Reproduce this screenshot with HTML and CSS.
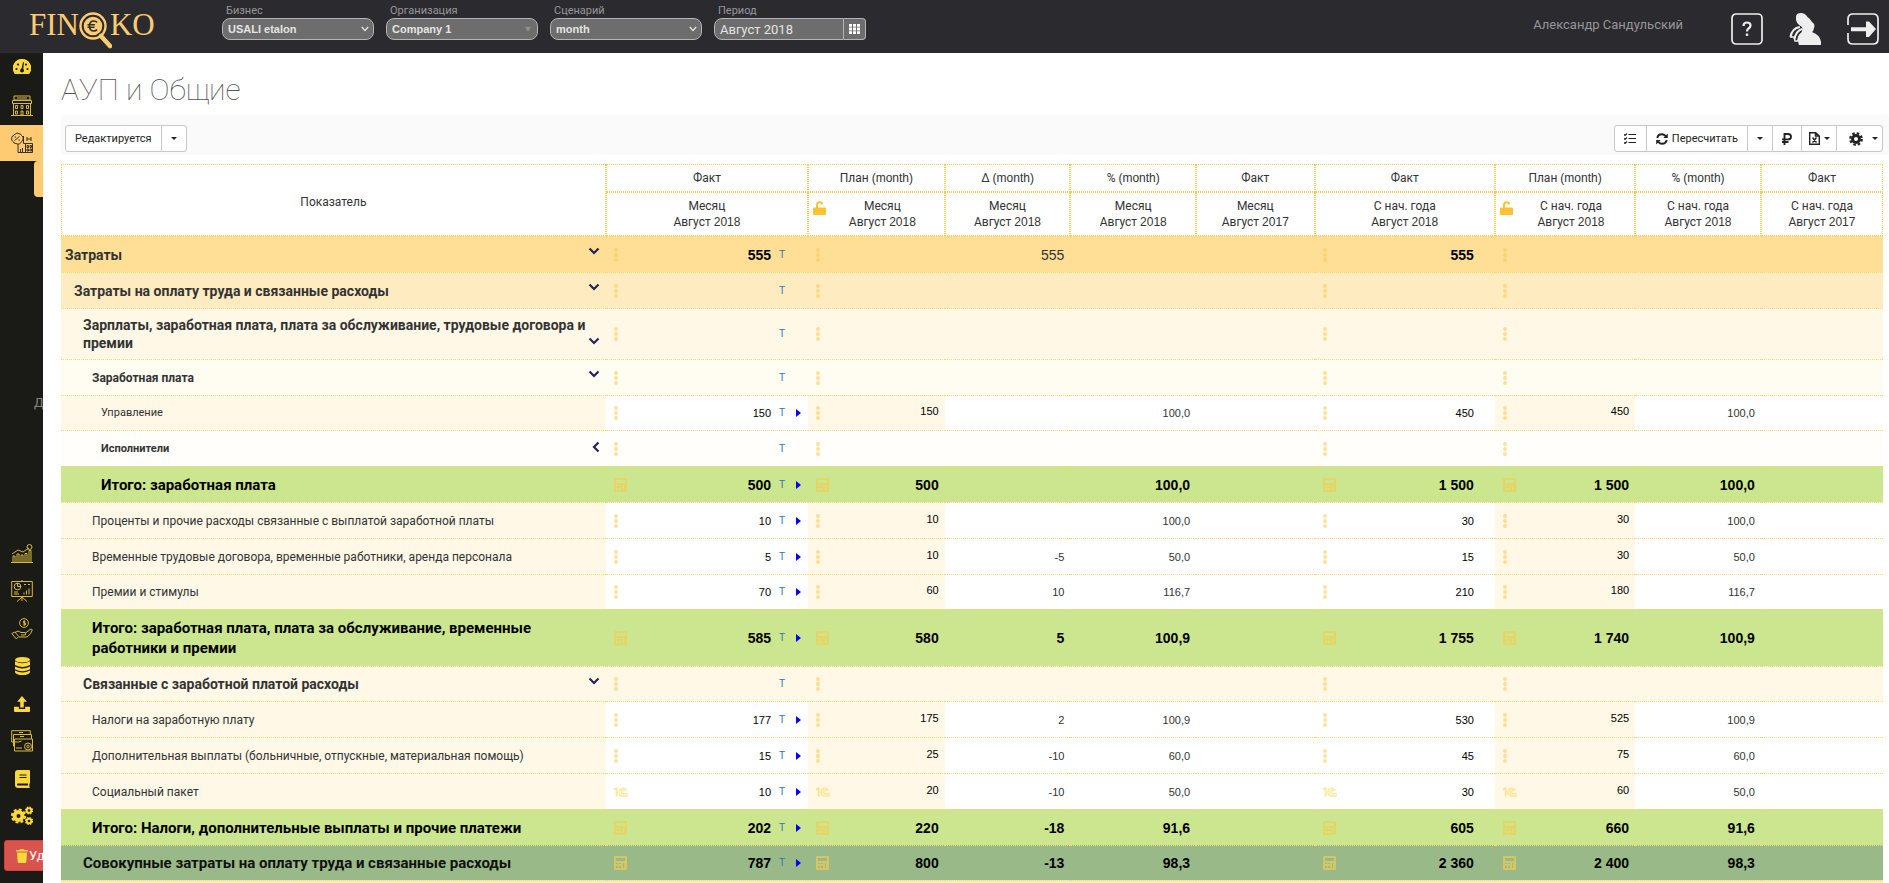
FILE: index.html
```html
<!DOCTYPE html>
<html lang="ru">
<head>
<meta charset="utf-8">
<title>АУП и Общие — Finoko</title>
<link rel="stylesheet" href="styles.css">
</head>
<body>
<svg class="sprite" aria-hidden="true">
  <symbol id="dots" viewBox="0 0 4 14"><path d="M2 2v10" stroke="currentColor" stroke-width="1" opacity=".5"/><circle cx="2" cy="2" r="2"/><circle cx="2" cy="7" r="2"/><circle cx="2" cy="12" r="2"/></symbol>
  <symbol id="calc" viewBox="0 0 13 14"><path fill-rule="evenodd" d="M1 0h11q1 0 1 1v12q0 1-1 1H1q-1 0-1-1V1q0-1 1-1zM2 2v3h9V2zM2 7v1h2V7zM5 7v1h2V7zM2 10v2h2v-2zM5 10v2h2v-2zM9 7v5h1V7z"/></symbol>
  <symbol id="onec" viewBox="0 0 14 10"><path d="M0 2.800L2.200 1M2.700.5V9.500" fill="none" stroke="currentColor" stroke-width="2"/><path d="M12.300 3.600A3.800 3.800 0 1 0 9 9H14M10.500 4A1.700 1.700 0 1 0 9 6.700H14" fill="none" stroke="currentColor" stroke-width="1.500"/></symbol>
  <symbol id="chev" viewBox="0 0 12 8"><path d="M1.500 1.500L6 6l4.500-4.500" fill="none" stroke="currentColor" stroke-width="2.200"/></symbol>
  <symbol id="chevl" viewBox="0 0 8 12"><path d="M6.500 1.500L2 6l4.500 4.500" fill="none" stroke="currentColor" stroke-width="2.200"/></symbol>
  <symbol id="play" viewBox="0 0 5 8"><path d="M0 0l5 4-5 4z"/></symbol>
  <symbol id="caret" viewBox="0 0 6 3"><path d="M0 0h6L3 3z"/></symbol>
  <symbol id="lock" viewBox="0 0 13 14"><path d="M4 7V4q0-2.800 2.600-2.800T9.200 3.600" fill="none" stroke="currentColor" stroke-width="2"/><rect y="6.500" width="13" height="7.500" rx="1"/></symbol>
</svg>

<header class="topbar">
  <a class="logo" href="#" aria-label="FINOKO"><span>FIN</span><svg class="logo-glass" viewBox="0 0 34 38"><circle cx="15" cy="15" r="12.500" fill="none" stroke="#fdcb70" stroke-width="2.400"/><circle cx="15" cy="15" r="9.300" fill="#fdcb70"/><path d="M23 25l9 10" stroke="#fdcb70" stroke-width="4.500" stroke-linecap="round"/><path d="M19 11.500q-1-1.500-3-1.500-4.500 0-4.500 5t4.500 5q2 0 3-1.500M9.500 13.800h7.500M9.500 16.300h7" fill="none" stroke="#2c2b30" stroke-width="1.600"/></svg><span>KO</span></a>
  <form class="filters">
    <div class="field"><label for="biz">Бизнес</label><div class="box"><select id="biz" class="lat"><option>USALI etalon</option></select><svg class="arrow" viewBox="0 0 8 6"><path d="M.8.8L4 4.600 7.200.8" fill="none" stroke="#eee" stroke-width="1.300"/></svg></div></div>
    <div class="field"><label for="org">Организация</label><div class="box"><select id="org" class="lat"><option>Company 1</option></select><svg class="arrow arrow-dim" viewBox="0 0 8 6"><path d="M1 1h6L4 5.500z"/></svg></div></div>
    <div class="field"><label for="scn">Сценарий</label><div class="box"><select id="scn" class="lat"><option>month</option></select><svg class="arrow" viewBox="0 0 8 6"><path d="M.8.8L4 4.600 7.200.8" fill="none" stroke="#eee" stroke-width="1.300"/></svg></div></div>
    <div class="field"><label for="per">Период</label><div class="box box-date"><input id="per" type="text" value="Август 2018"><button type="button" class="grid-btn" aria-label="Выбрать период"><svg viewBox="0 0 11 10"><path d="M0 0h3v2.800H0zM4 0h3v2.800H4zM8 0h3v2.800H8zM0 3.600h3v2.800H0zM4 3.600h3v2.800H4zM8 3.600h3v2.800H8zM0 7.200h3V10H0zM4 7.200h3V10H4zM8 7.200h3V10H8z"/></svg></button></div></div>
  </form>
  <div class="user">
    <span class="user-name">Александр Сандульский</span>
    <a href="#" class="top-ic" aria-label="Помощь"><svg viewBox="0 0 32 32"><rect x="1" y="1" width="30" height="30" rx="4" fill="none" stroke="#eee" stroke-width="1.700"/><path d="M12.500 13q0-3.500 3.500-3.500t3.500 3q0 1.700-2 3-1.500 1-1.500 3" fill="none" stroke="#eee" stroke-width="2.200"/><rect x="14.800" y="20.500" width="2.400" height="2.400"/></svg></a>
    <a href="#" class="top-ic" aria-label="Профиль"><svg viewBox="0 0 32 32"><path d="M7 4q0-4 5-4 4 0 6.500 4 2.500 1.500 4.500 5 3.500 2 2 6-.5 3-2 4 8 3 9 9.500V32H10q-2-5 1-10 3-4 2-8-7-4-6-10z"/><path d="M11 14Q3 15 1.500 24M13 16q-6 2-7.500 10M14 20q-4 1-5 8" fill="none" stroke="#eee" stroke-width="2"/><path d="M1 24h4l1 4h4" fill="none" stroke="#eee" stroke-width="1.500"/></svg></a>
    <a href="#" class="top-ic" aria-label="Выход"><svg viewBox="0 0 32 32"><path d="M1 12V6q0-5 5-5h20q5 0 5 5v20q0 5-5 5H6q-5 0-5-5v-6" fill="none" stroke="#eee" stroke-width="1.700"/><path d="M4 14.300h15V8.500h3L29 16l-7 8h-3v-5.700H4z"/></svg></a>
  </div>
</header>

<div class="layout">
  <nav class="side">
    <a href="#" class="side-it" aria-label="Панель"><svg width="18" height="16" viewBox="0 0 18 16"><path d="M9 0a9 9 0 0 1 8 13.500Q16.600 15 15.500 15h-13Q1.400 15 1 13.500A9 9 0 0 1 9 0z"/><g fill="#1a1a17"><circle cx="3.500" cy="10" r="1.100"/><circle cx="5" cy="5.500" r="1.100"/><circle cx="13" cy="5.500" r="1.100"/><circle cx="14.500" cy="10" r="1.100"/><circle cx="9" cy="11.500" r="2"/><path d="M8.300 11L10 3l1 .3-1 8z"/></g></svg></a>
    <a href="#" class="side-it side-mid" aria-label="Отель"><svg class="ln" width="22" height="22" viewBox="0 0 22 22"><path d="M3 1h16v4H3zM1.500 5.500h19v3h-19zM2.500 8.500V20M19.500 8.500V20M0 20.500h22M4.500 10.500h2v3h-2zM10 10.500h2v3h-2zM15.500 10.500h2v3h-2zM4.500 16h2v3h-2zM10 16h2v4h-2zM15.500 16h2v3h-2zM6 3h10"/></svg></a>
    <a href="#" class="side-it is-on" aria-label="Бюджеты"><svg class="ln" width="22" height="22" viewBox="0 0 22 22"><path d="M6 1l2 .8L9.500 2l1 1.500L12 5v2l-.5 2-1.500 1.200L8.500 12h-2L5 11.500 3 11l-1-1.500L.7 8V6L1.500 4 3 3zM3.500 8.500l5-4M3.500 5h1.500M7.500 8h1.500M7 12v8.500h14.500V11.500h-7v9M14.500 11.500h-2V4M16 5v4M20 5v4M16 7h4M9.500 20v-3M11.500 20v-4M16 13.500h1.500v2H16zM19 13.500h1.500v2H19zM16 17h1.500v2H16zM19 17h1.500v2H19z"/></svg></a>
    <span class="side-sub"></span>
    <span class="side-text">Доходы</span>
    <div class="side-low">
      <a href="#" class="side-it" aria-label="Графики"><svg class="ln" width="22" height="20" viewBox="0 0 22 20"><path d="M0 18.500h22M2 18v-6h2v6M6 18v-8h2v8M10 18v-7h2v7M14 18V9.500h2V18M18 18V6.500h2V18M1 10l6-4 5 2 6-4"/><circle cx="18.500" cy="3" r="2.500"/></svg></a>
      <a href="#" class="side-it" aria-label="Презентация"><svg class="ln" width="22" height="22" viewBox="0 0 22 22"><path d="M.7 1.500h20.600v15H.7zM11 0v1.500M11 16.500V21M11 17l-5 4.500M11 17l5 4.500M13 4.500h2M17 4.500h2M3 12h4M3 14h5M13 14.500v-2M15.500 14.500v-4M18 14.500v-6"/><circle cx="6.500" cy="6.500" r="3.300"/><path d="M6.500 3v3.500H10"/></svg></a>
      <a href="#" class="side-it" aria-label="Платежи"><svg class="ln" width="22" height="22" viewBox="0 0 22 22"><circle cx="13" cy="5" r="4.400"/><path d="M14.500 3.300h-2v1.700h2v1.700h-2.200M13.300 2.300v5.400"/><path d="M.8 15.500l3-1.500 4 4.500-2.500 2.500zM4 14.500q3-3 6 0h4q1.500 1.500 0 2.500h-4M14 15.500l5-4q2-1 2.300.5-1 4-5.300 7H8"/></svg></a>
      <a href="#" class="side-it" aria-label="База данных"><svg width="15" height="18" viewBox="0 0 15 18"><ellipse cx="7.500" cy="2.800" rx="7.500" ry="2.800"/><path d="M0 4.300q7.500 4 15 0V8q-7.500 4-15 0zM0 9.500q7.500 4 15 0v2.800q-7.500 4-15 0zM0 13.600q7.500 4 15 0v1.600q-1 2.800-7.500 2.800T0 15.200z"/></svg></a>
      <a href="#" class="side-it" aria-label="Загрузка"><svg width="16" height="18" viewBox="0 0 18 18"><path d="M9 0l5.500 6.500H11V13H7V6.500H3.500zM0 12h5.500v2.500h7V12H18v5q0 1-1 1H1q-1 0-1-1z"/></svg></a>
      <a href="#" class="side-it" aria-label="Счета"><svg class="ln" width="22" height="22" viewBox="0 0 22 22"><path d="M2.500 12H.7V.7h18.600V4M4 16H2.500V4.500h18V9M3.500 9h18v12h-18zM8 2.500h4M9 6.500h4M3.500 12h4l3-1M5 18h6"/><circle cx="17" cy="16.500" r="3.500"/><circle cx="17" cy="16.500" r="1.300"/></svg></a>
      <a href="#" class="side-it" aria-label="Справочник"><svg width="15" height="18" viewBox="0 0 15 18"><path fill-rule="evenodd" d="M3 0h11q1 0 1 1v12l-.6 1v3l.6 1H3q-3 0-3-3V3q0-3 3-3zM4.500 4.500v1h7v-1zM4.500 7v1h7V7zM3 13.500q-1 0-1 1t1 1h10v-2z"/></svg></a>
      <a href="#" class="side-it" aria-label="Настройки"><svg width="22" height="20" viewBox="0 0 22 20"><g fill="none" stroke="#fdd83c"><circle cx="7.500" cy="10" r="4" stroke-width="4"/><circle cx="7.500" cy="10" r="6.600" stroke-width="2" stroke-dasharray="3 2.180"/><circle cx="18" cy="4.500" r="2.300" stroke-width="2"/><circle cx="18" cy="4.500" r="3.500" stroke-width="1.200" stroke-dasharray="1.600 1.150"/><circle cx="18" cy="15" r="2.300" stroke-width="2"/><circle cx="18" cy="15" r="3.500" stroke-width="1.200" stroke-dasharray="1.600 1.150"/></g></svg></a>
    </div>
    <button type="button" class="del"><svg width="12" height="14" viewBox="0 0 12 14"><path d="M0 1h3.500L4.500 0h3l1 1H12v1.500H0zM1 3.500h10L10.300 13q-.1 1-1 1H2.700q-.9 0-1-1z"/></svg>Удалить</button>
  </nav>

  <main class="main">
    <h1>АУП и Общие</h1>
    <div class="tools">
      <div class="group"><button type="button" class="btn">Редактируется</button><button type="button" class="btn btn-car" aria-label="Статус"><svg class="caret"><use href="#caret"/></svg></button></div>
      <div class="group">
        <button type="button" class="btn w32" aria-label="Список"><svg width="12" height="11" viewBox="0 0 12 11"><path d="M0 1.500l1 1L3 .5M0 5.500l1 1 2-2M0 9.500l1 1 2-2M4.500 1.500H12M4.500 5.500H12M4.500 9.500H12" fill="none" stroke="#222" stroke-width="1.200"/></svg></button>
        <button type="button" class="btn"><svg width="12" height="12" viewBox="0 0 12 12"><path d="M1.300 5Q2 1.300 6 1.300q2 0 3.700 1.900M10.700 7Q10 10.700 6 10.700q-2 0-3.700-1.900" fill="none" stroke="#222" stroke-width="1.900"/><path d="M11.800.5V5H7.300zM.2 11.500V7h4.500z"/></svg>Пересчитать</button>
        <button type="button" class="btn btn-car" aria-label="Варианты пересчёта"><svg class="caret"><use href="#caret"/></svg></button>
        <button type="button" class="btn w30" aria-label="Валюта"><svg width="10" height="12" viewBox="0 0 10 12"><path d="M2.500 12V1H6q3 0 3 2.700T6 6.400H0M0 9h6.500" fill="none" stroke="#222" stroke-width="1.900"/></svg></button>
        <button type="button" class="btn w35" aria-label="Экспорт"><svg width="11" height="13" viewBox="0 0 11 13"><path d="M.7.700h6L10.300 4v8.300H.7zM6.500.7V4H10M3.500 5.500l4 5M7.500 5.500l-4 5" fill="none" stroke="#222" stroke-width="1.400"/></svg><svg class="caret"><use href="#caret"/></svg></button>
        <button type="button" class="btn w46" aria-label="Настройки таблицы"><svg width="14" height="14" viewBox="0 0 14 14"><circle cx="7" cy="7" r="3.500" fill="none" stroke="#222" stroke-width="3"/><circle cx="7" cy="7" r="5.800" fill="none" stroke="#222" stroke-width="2.200" stroke-dasharray="2.600 1.955"/></svg><svg class="caret caret-far"><use href="#caret"/></svg></button>
      </div>
    </div>

    <table class="grid">
      <colgroup><col class="c1"><col class="c2"><col class="c3"><col class="c4"><col class="c5"><col class="c6"><col class="c7"><col class="c8"><col class="c9"><col class="c10"></colgroup>
      <thead>
        <tr><th rowspan="2">Показатель</th><th>Факт</th><th>План <b>(month)</b></th><th>Δ <b>(month)</b></th><th>% <b>(month)</b></th><th>Факт</th><th>Факт</th><th>План <b>(month)</b></th><th>% <b>(month)</b></th><th>Факт</th></tr>
        <tr><th>Месяц<br>Август <b>2018</b></th><th><div class="lk"><svg><use href="#lock"/></svg><span>Месяц<br>Август <b>2018</b></span></div></th><th>Месяц<br>Август <b>2018</b></th><th>Месяц<br>Август <b>2018</b></th><th>Месяц<br>Август <b>2017</b></th><th>С нач. года<br>Август <b>2018</b></th><th><div class="lk"><svg><use href="#lock"/></svg><span>С нач. года<br>Август <b>2018</b></span></div></th><th>С нач. года<br>Август <b>2018</b></th><th>С нач. года<br>Август <b>2017</b></th></tr>
      </thead>
      <tbody>
        <tr class="g1"><td><div class="nm"><span>Затраты</span><svg class="chev"><use href="#chev"/></svg></div></td><td><div class="v"><svg class="dots"><use href="#dots"/></svg><span>555</span><a href="#">T</a><i></i></div></td><td><div class="v"><svg class="dots"><use href="#dots"/></svg></div></td><td class="soft">555</td><td></td><td></td><td><div class="v y"><svg class="dots"><use href="#dots"/></svg><span>555</span></div></td><td><div class="v"><svg class="dots"><use href="#dots"/></svg></div></td><td></td><td></td></tr>
        <tr class="g2"><td><div class="nm"><span>Затраты на оплату труда и связанные расходы</span><svg class="chev"><use href="#chev"/></svg></div></td><td><div class="v"><svg class="dots"><use href="#dots"/></svg><span></span><a href="#">T</a><i></i></div></td><td><div class="v"><svg class="dots"><use href="#dots"/></svg></div></td><td></td><td></td><td></td><td><div class="v y"><svg class="dots"><use href="#dots"/></svg></div></td><td><div class="v"><svg class="dots"><use href="#dots"/></svg></div></td><td></td><td></td></tr>
        <tr class="g3 tall"><td><div class="nm"><span>Зарплаты, заработная плата, плата за обслуживание, трудовые договора и премии</span><svg class="chev"><use href="#chev"/></svg></div></td><td><div class="v"><svg class="dots"><use href="#dots"/></svg><span></span><a href="#">T</a><i></i></div></td><td><div class="v"><svg class="dots"><use href="#dots"/></svg></div></td><td></td><td></td><td></td><td><div class="v y"><svg class="dots"><use href="#dots"/></svg></div></td><td><div class="v"><svg class="dots"><use href="#dots"/></svg></div></td><td></td><td></td></tr>
        <tr class="g4"><td><div class="nm"><span>Заработная плата</span><svg class="chev"><use href="#chev"/></svg></div></td><td><div class="v"><svg class="dots"><use href="#dots"/></svg><span></span><a href="#">T</a><i></i></div></td><td><div class="v"><svg class="dots"><use href="#dots"/></svg></div></td><td></td><td></td><td></td><td><div class="v y"><svg class="dots"><use href="#dots"/></svg></div></td><td><div class="v"><svg class="dots"><use href="#dots"/></svg></div></td><td></td><td></td></tr>
        <tr class="leaf deep short"><td><div class="nm"><span>Управление</span></div></td><td><div class="v"><svg class="dots"><use href="#dots"/></svg><span>150</span><a href="#">T</a><i><svg><use href="#play"/></svg></i></div></td><td><div class="v"><svg class="dots"><use href="#dots"/></svg><span>150</span></div></td><td></td><td>100,0</td><td></td><td><div class="v y"><svg class="dots"><use href="#dots"/></svg><span>450</span></div></td><td><div class="v"><svg class="dots"><use href="#dots"/></svg><span>450</span></div></td><td>100,0</td><td></td></tr>
        <tr class="g5"><td><div class="nm"><span>Исполнители</span><svg class="chevl"><use href="#chevl"/></svg></div></td><td><div class="v"><svg class="dots"><use href="#dots"/></svg><span></span><a href="#">T</a><i></i></div></td><td><div class="v"><svg class="dots"><use href="#dots"/></svg></div></td><td></td><td></td><td></td><td><div class="v y"><svg class="dots"><use href="#dots"/></svg></div></td><td><div class="v"><svg class="dots"><use href="#dots"/></svg></div></td><td></td><td></td></tr>
        <tr class="total in5"><td><div class="nm"><span>Итого: заработная плата</span></div></td><td><div class="v"><svg class="calc"><use href="#calc"/></svg><span>500</span><a href="#">T</a><i><svg><use href="#play"/></svg></i></div></td><td><div class="v"><svg class="calc"><use href="#calc"/></svg><span>500</span></div></td><td></td><td>100,0</td><td></td><td><div class="v y"><svg class="calc"><use href="#calc"/></svg><span>1 500</span></div></td><td><div class="v"><svg class="calc"><use href="#calc"/></svg><span>1 500</span></div></td><td>100,0</td><td></td></tr>
        <tr class="leaf"><td><div class="nm"><span>Проценты и прочие расходы связанные с выплатой заработной платы</span></div></td><td><div class="v"><svg class="dots"><use href="#dots"/></svg><span>10</span><a href="#">T</a><i><svg><use href="#play"/></svg></i></div></td><td><div class="v"><svg class="dots"><use href="#dots"/></svg><span>10</span></div></td><td></td><td>100,0</td><td></td><td><div class="v y"><svg class="dots"><use href="#dots"/></svg><span>30</span></div></td><td><div class="v"><svg class="dots"><use href="#dots"/></svg><span>30</span></div></td><td>100,0</td><td></td></tr>
        <tr class="leaf"><td><div class="nm"><span>Временные трудовые договора, временные работники, аренда персонала</span></div></td><td><div class="v"><svg class="dots"><use href="#dots"/></svg><span>5</span><a href="#">T</a><i><svg><use href="#play"/></svg></i></div></td><td><div class="v"><svg class="dots"><use href="#dots"/></svg><span>10</span></div></td><td>-5</td><td>50,0</td><td></td><td><div class="v y"><svg class="dots"><use href="#dots"/></svg><span>15</span></div></td><td><div class="v"><svg class="dots"><use href="#dots"/></svg><span>30</span></div></td><td>50,0</td><td></td></tr>
        <tr class="leaf short"><td><div class="nm"><span>Премии и стимулы</span></div></td><td><div class="v"><svg class="dots"><use href="#dots"/></svg><span>70</span><a href="#">T</a><i><svg><use href="#play"/></svg></i></div></td><td><div class="v"><svg class="dots"><use href="#dots"/></svg><span>60</span></div></td><td>10</td><td>116,7</td><td></td><td><div class="v y"><svg class="dots"><use href="#dots"/></svg><span>210</span></div></td><td><div class="v"><svg class="dots"><use href="#dots"/></svg><span>180</span></div></td><td>116,7</td><td></td></tr>
        <tr class="total in4 tall2"><td><div class="nm"><span>Итого: заработная плата, плата за обслуживание, временные работники и премии</span></div></td><td><div class="v"><svg class="calc"><use href="#calc"/></svg><span>585</span><a href="#">T</a><i><svg><use href="#play"/></svg></i></div></td><td><div class="v"><svg class="calc"><use href="#calc"/></svg><span>580</span></div></td><td>5</td><td>100,9</td><td></td><td><div class="v y"><svg class="calc"><use href="#calc"/></svg><span>1 755</span></div></td><td><div class="v"><svg class="calc"><use href="#calc"/></svg><span>1 740</span></div></td><td>100,9</td><td></td></tr>
        <tr class="g3 short"><td><div class="nm"><span>Связанные с заработной платой расходы</span><svg class="chev"><use href="#chev"/></svg></div></td><td><div class="v"><svg class="dots"><use href="#dots"/></svg><span></span><a href="#">T</a><i></i></div></td><td><div class="v"><svg class="dots"><use href="#dots"/></svg></div></td><td></td><td></td><td></td><td><div class="v y"><svg class="dots"><use href="#dots"/></svg></div></td><td><div class="v"><svg class="dots"><use href="#dots"/></svg></div></td><td></td><td></td></tr>
        <tr class="leaf"><td><div class="nm"><span>Налоги на заработную плату</span></div></td><td><div class="v"><svg class="dots"><use href="#dots"/></svg><span>177</span><a href="#">T</a><i><svg><use href="#play"/></svg></i></div></td><td><div class="v"><svg class="dots"><use href="#dots"/></svg><span>175</span></div></td><td>2</td><td>100,9</td><td></td><td><div class="v y"><svg class="dots"><use href="#dots"/></svg><span>530</span></div></td><td><div class="v"><svg class="dots"><use href="#dots"/></svg><span>525</span></div></td><td>100,9</td><td></td></tr>
        <tr class="leaf"><td><div class="nm"><span>Дополнительная выплаты (больничные, отпускные, материальная помощь)</span></div></td><td><div class="v"><svg class="dots"><use href="#dots"/></svg><span>15</span><a href="#">T</a><i><svg><use href="#play"/></svg></i></div></td><td><div class="v"><svg class="dots"><use href="#dots"/></svg><span>25</span></div></td><td>-10</td><td>60,0</td><td></td><td><div class="v y"><svg class="dots"><use href="#dots"/></svg><span>45</span></div></td><td><div class="v"><svg class="dots"><use href="#dots"/></svg><span>75</span></div></td><td>60,0</td><td></td></tr>
        <tr class="leaf"><td><div class="nm"><span>Социальный пакет</span></div></td><td><div class="v"><svg class="onec"><use href="#onec"/></svg><span>10</span><a href="#">T</a><i><svg><use href="#play"/></svg></i></div></td><td><div class="v"><svg class="onec"><use href="#onec"/></svg><span>20</span></div></td><td>-10</td><td>50,0</td><td></td><td><div class="v y"><svg class="onec"><use href="#onec"/></svg><span>30</span></div></td><td><div class="v"><svg class="onec"><use href="#onec"/></svg><span>60</span></div></td><td>50,0</td><td></td></tr>
        <tr class="total in4"><td><div class="nm"><span>Итого: Налоги, дополнительные выплаты и прочие платежи</span></div></td><td><div class="v"><svg class="calc"><use href="#calc"/></svg><span>202</span><a href="#">T</a><i><svg><use href="#play"/></svg></i></div></td><td><div class="v"><svg class="calc"><use href="#calc"/></svg><span>220</span></div></td><td>-18</td><td>91,6</td><td></td><td><div class="v y"><svg class="calc"><use href="#calc"/></svg><span>605</span></div></td><td><div class="v"><svg class="calc"><use href="#calc"/></svg><span>660</span></div></td><td>91,6</td><td></td></tr>
        <tr class="total grand short"><td><div class="nm"><span>Совокупные затраты на оплату труда и связанные расходы</span></div></td><td><div class="v"><svg class="calc"><use href="#calc"/></svg><span>787</span><a href="#">T</a><i><svg><use href="#play"/></svg></i></div></td><td><div class="v"><svg class="calc"><use href="#calc"/></svg><span>800</span></div></td><td>-13</td><td>98,3</td><td></td><td><div class="v y"><svg class="calc"><use href="#calc"/></svg><span>2 360</span></div></td><td><div class="v"><svg class="calc"><use href="#calc"/></svg><span>2 400</span></div></td><td>98,3</td><td></td></tr>
        <tr class="g2"><td></td><td></td><td></td><td></td><td></td><td></td><td></td><td></td><td></td><td></td></tr>
      </tbody>
    </table>
  </main>
</div>
</body>
</html>
```
FILE: styles.css
```css
* { box-sizing: border-box; }
body {
  margin: 0;
  height: 100vh;
  display: flex;
  flex-direction: column;
  overflow: hidden;
  background: #fff;
  color: #333;
  font: 12px/19px Roboto, "Liberation Sans", sans-serif;
}
a { color: inherit; text-decoration: none; }
button, input, select { font: inherit; color: inherit; margin: 0; }
svg { fill: currentColor; flex: none; display: block; }
.sprite { position: absolute; width: 0; height: 0; }

/* Top bar */
.topbar {
  flex: none;
  height: 53px;
  display: flex;
  background: #2b2a2f;
  color: #eee;
}
.logo {
  width: 222px;
  padding: 9px 0 0 29px;
  display: flex;
  align-items: flex-start;
  color: #fdcb70;
  font: 31px/32px "Liberation Serif", serif;
}
.logo-glass { width: 34px; height: 38px; margin: 2px -2px 0 -1px; }
.filters { display: flex; gap: 12px; padding-top: 3px; }
.field { width: 152px; }
.field label {
  display: block;
  padding-left: 4px;
  color: #97969a;
  font-size: 11px;
  line-height: 15px;
}
.box { position: relative; height: 22px; }
.box select, .box input {
  width: 100%;
  height: 100%;
  padding: 0 5px;
  appearance: none;
  border: 1px solid #b4b4b4;
  border-radius: 8px;
  background: #6d6d6d;
  color: #e4e4e4;
  outline: 0;
}
.box .lat { font: 700 11px/16px "Liberation Sans", Arial, sans-serif; }
.arrow { position: absolute; right: 5px; top: 8px; width: 8px; height: 6px; }
.arrow-dim { color: #929292; right: 6px; }
.box-date { display: flex; }
.box-date input { border-radius: 8px 0 0 8px; flex: 1; min-width: 0; font-size: 13px; }
.grid-btn {
  width: 22px;
  padding: 0 5px;
  border: 1px solid #b4b4b4;
  border-left: 0;
  border-radius: 0 4px 4px 0;
  background: #6d6d6d;
  color: #fff;
}
.grid-btn svg { width: 11px; height: 10px; }
.user { margin-left: auto; display: flex; gap: 26px; padding: 13px 10px 0 0; }
.user-name { margin-right: 22px; color: #97969a; font-size: 13px; line-height: 24px; }
.top-ic svg { width: 32px; height: 32px; }

/* Side menu */
.layout { flex: 1; min-height: 0; display: flex; }
.side {
  flex: none;
  width: 43px;
  display: flex;
  flex-direction: column;
  overflow: hidden;
  background: #1a1a17;
  color: #fdd83c;
}
.side-it {
  height: 36px;
  padding: 0 0 8px 1px;
  display: flex;
  flex: none;
  align-items: center;
  justify-content: center;
}
.side-mid { padding-bottom: 3px; }
.side-it .ln { fill: none; stroke: #d8bb3c; stroke-width: 1; }
.side-it.is-on { padding-bottom: 0; background: #fecb72; }
.side-it.is-on .ln { stroke: #3a3020; }
.side-sub {
  flex: none;
  align-self: flex-end;
  width: 9px;
  height: 36px;
  background: #fecb72;
  border-radius: 4px 0 0 4px;
}
.side-text {
  margin-top: 196px;
  padding-left: 34px;
  color: #85857f;
  font-size: 13px;
  white-space: nowrap;
}
.side-low {
  flex: none;
  height: 300px;
  display: grid;
  grid-template-rows: repeat(8, 1fr);
  margin-top: auto;
}
.side-low .side-it { height: auto; padding-bottom: 0; }
.del {
  flex: none;
  display: flex;
  align-items: center;
  gap: 1px;
  width: 90px;
  height: 31px;
  margin: 5px 0 12px 4px;
  padding: 0 0 0 11px;
  border: 1px solid #d43f3a;
  border-radius: 3px;
  background: #d9534f;
  color: #fff;
  font-size: 13px;
}
.del svg { color: #fdd83c; }

/* Content */
.main { flex: 1; min-width: 0; padding: 17px 0 0 18px; }
h1 {
  margin: 0 0 5px;
  font-size: 30px;
  line-height: 40px;
  font-weight: 100;
  color: #555;
}
.tools {
  display: flex;
  justify-content: space-between;
  height: 40px;
  margin-bottom: 9px;
  padding: 10px 6px 3px 4px;
  background: #fafafa;
  border-radius: 4px;
}
.group { display: flex; }
.btn {
  display: flex;
  align-items: center;
  justify-content: center;
  gap: 4px;
  padding: 0 9px;
  margin-left: -1px;
  border: 1px solid #c8c8c8;
  background: #fff;
  color: #222;
  font-size: 11px;
}
.btn:first-child { margin-left: 0; border-radius: 3px 0 0 3px; }
.btn:last-child { border-radius: 0 3px 3px 0; }
.btn-car { width: 26px; padding: 0; }
.w32 { width: 33px; padding: 0; }
.w30 { width: 30px; padding: 0; }
.w35 { width: 36px; padding: 0; }
.w46 { width: 47px; padding: 0 4px 0 12px; }
.caret { width: 6px; height: 3px; }
.caret-far { margin-left: 5px; }

/* Data table */
.grid {
  width: calc(100% - 6px);
  table-layout: fixed;
  border-collapse: separate;
  border-spacing: 0;
}
.c1 { width: 29.9%; }
.c2 { width: 11.1%; }
.c3 { width: 7.5%; }
.c4, .c5 { width: 6.9%; }
.c6 { width: 6.5%; }
.c7 { width: 9.9%; }
.c8 { width: 7.7%; }
.c9 { width: 6.9%; }
.c10 { width: 6.7%; }
.grid th {
  padding: 0;
  height: 28px;
  border: 1px dotted #fbc94e;
  font-weight: 400;
  line-height: 16px;
}
.grid th[rowspan] { padding-top: 4px; }
.grid tr + tr th { height: 44px; }
.grid th b { font: 12px/16px "Liberation Sans", sans-serif; }
.lk { display: flex; padding: 0 5px 0 4px; }
.lk span { flex: 1; }
.lk svg { width: 13px; height: 14px; margin-top: 3px; color: #fdc132; }
.grid td {
  height: 36px;
  padding: 0 6px 0 0;
  border-top: 1px dotted #fbd774;
  text-align: right;
  font: 11px/16px "Liberation Sans", sans-serif;
}
.grid td:first-child { font-family: Roboto, sans-serif; text-align: left; }
.nm { display: flex; align-items: center; }
.nm span { flex: 1; }
.chev { width: 12px; height: 8px; margin-bottom: 7px; color: #25245a; }
.chevl { width: 8px; height: 12px; margin-bottom: 4px; color: #25245a; }
.v { display: flex; align-items: center; padding-left: 8px; color: #000; }
.v span { flex: 1; }
.v a { width: 6px; margin-left: 8px; color: #2a77b8; font-size: 10px; text-align: left; }
.v i { width: 18px; padding-left: 11px; margin-right: -1px; color: #00f; }
.v i svg { width: 5px; height: 8px; }
.v.y { padding-right: 15px; }
.dots { width: 4px; height: 14px; color: #fbcb52; opacity: .55; }
.calc { width: 13px; height: 14px; color: #f3cd50; opacity: .65; }
.onec { width: 14px; height: 10px; color: #fbd750; opacity: .55; }

.grid .short td { height: 35px; }
.grid .g1 td { background: #fedf95; font-size: 14px; font-weight: 700; }
.grid .g1 td.soft { font-weight: 400; }
.grid .g1 td:first-child { padding-left: 4px; }
.g2 td { background: #ffebc0; }
.g3 td { background: #fff8e7; }
.g4 td { background: #fffcf2; }
.g5 td { background: #fffefa; }
.grid .g2 td:first-child { padding-left: 13px; font-size: 14px; font-weight: 700; }
.grid .g3 td:first-child { padding-left: 22px; font-size: 14px; font-weight: 700; line-height: 18px; }
.grid .g4 td:first-child { padding-left: 31px; font-size: 12px; font-weight: 700; }
.grid .g5 td:first-child { padding-left: 40px; font-size: 11px; font-weight: 700; }
.grid .g1 a, .grid .total a { font-weight: 400; }
.grid .tall td { height: 51px; }
.tall .nm { align-items: flex-end; }
.grid .leaf td:first-child { padding-left: 31px; font-size: 12px; background: #fff8e7; }
.grid .leaf.deep td:first-child { padding-left: 40px; font-size: 11px; }
.leaf td:nth-child(3), .leaf td:nth-child(8) { background: #fff8e7; }
.leaf td:nth-child(3) span, .leaf td:nth-child(8) span { padding-bottom: 4px; }
.grid .total td { background: #cbe68f; color: #000; font-size: 14px; font-weight: 700; line-height: 20px; }
.grid .total td:first-child { font-size: 15px; }
.grid .in5 td:first-child { padding-left: 40px; }
.grid .in4 td:first-child { padding-left: 31px; }
.grid .tall2 td { height: 57px; }
.grid .grand td { background: #99b988; }
.grid .grand td:first-child { padding-left: 22px; }
.grid .grand .nm { color: #111; }
```
